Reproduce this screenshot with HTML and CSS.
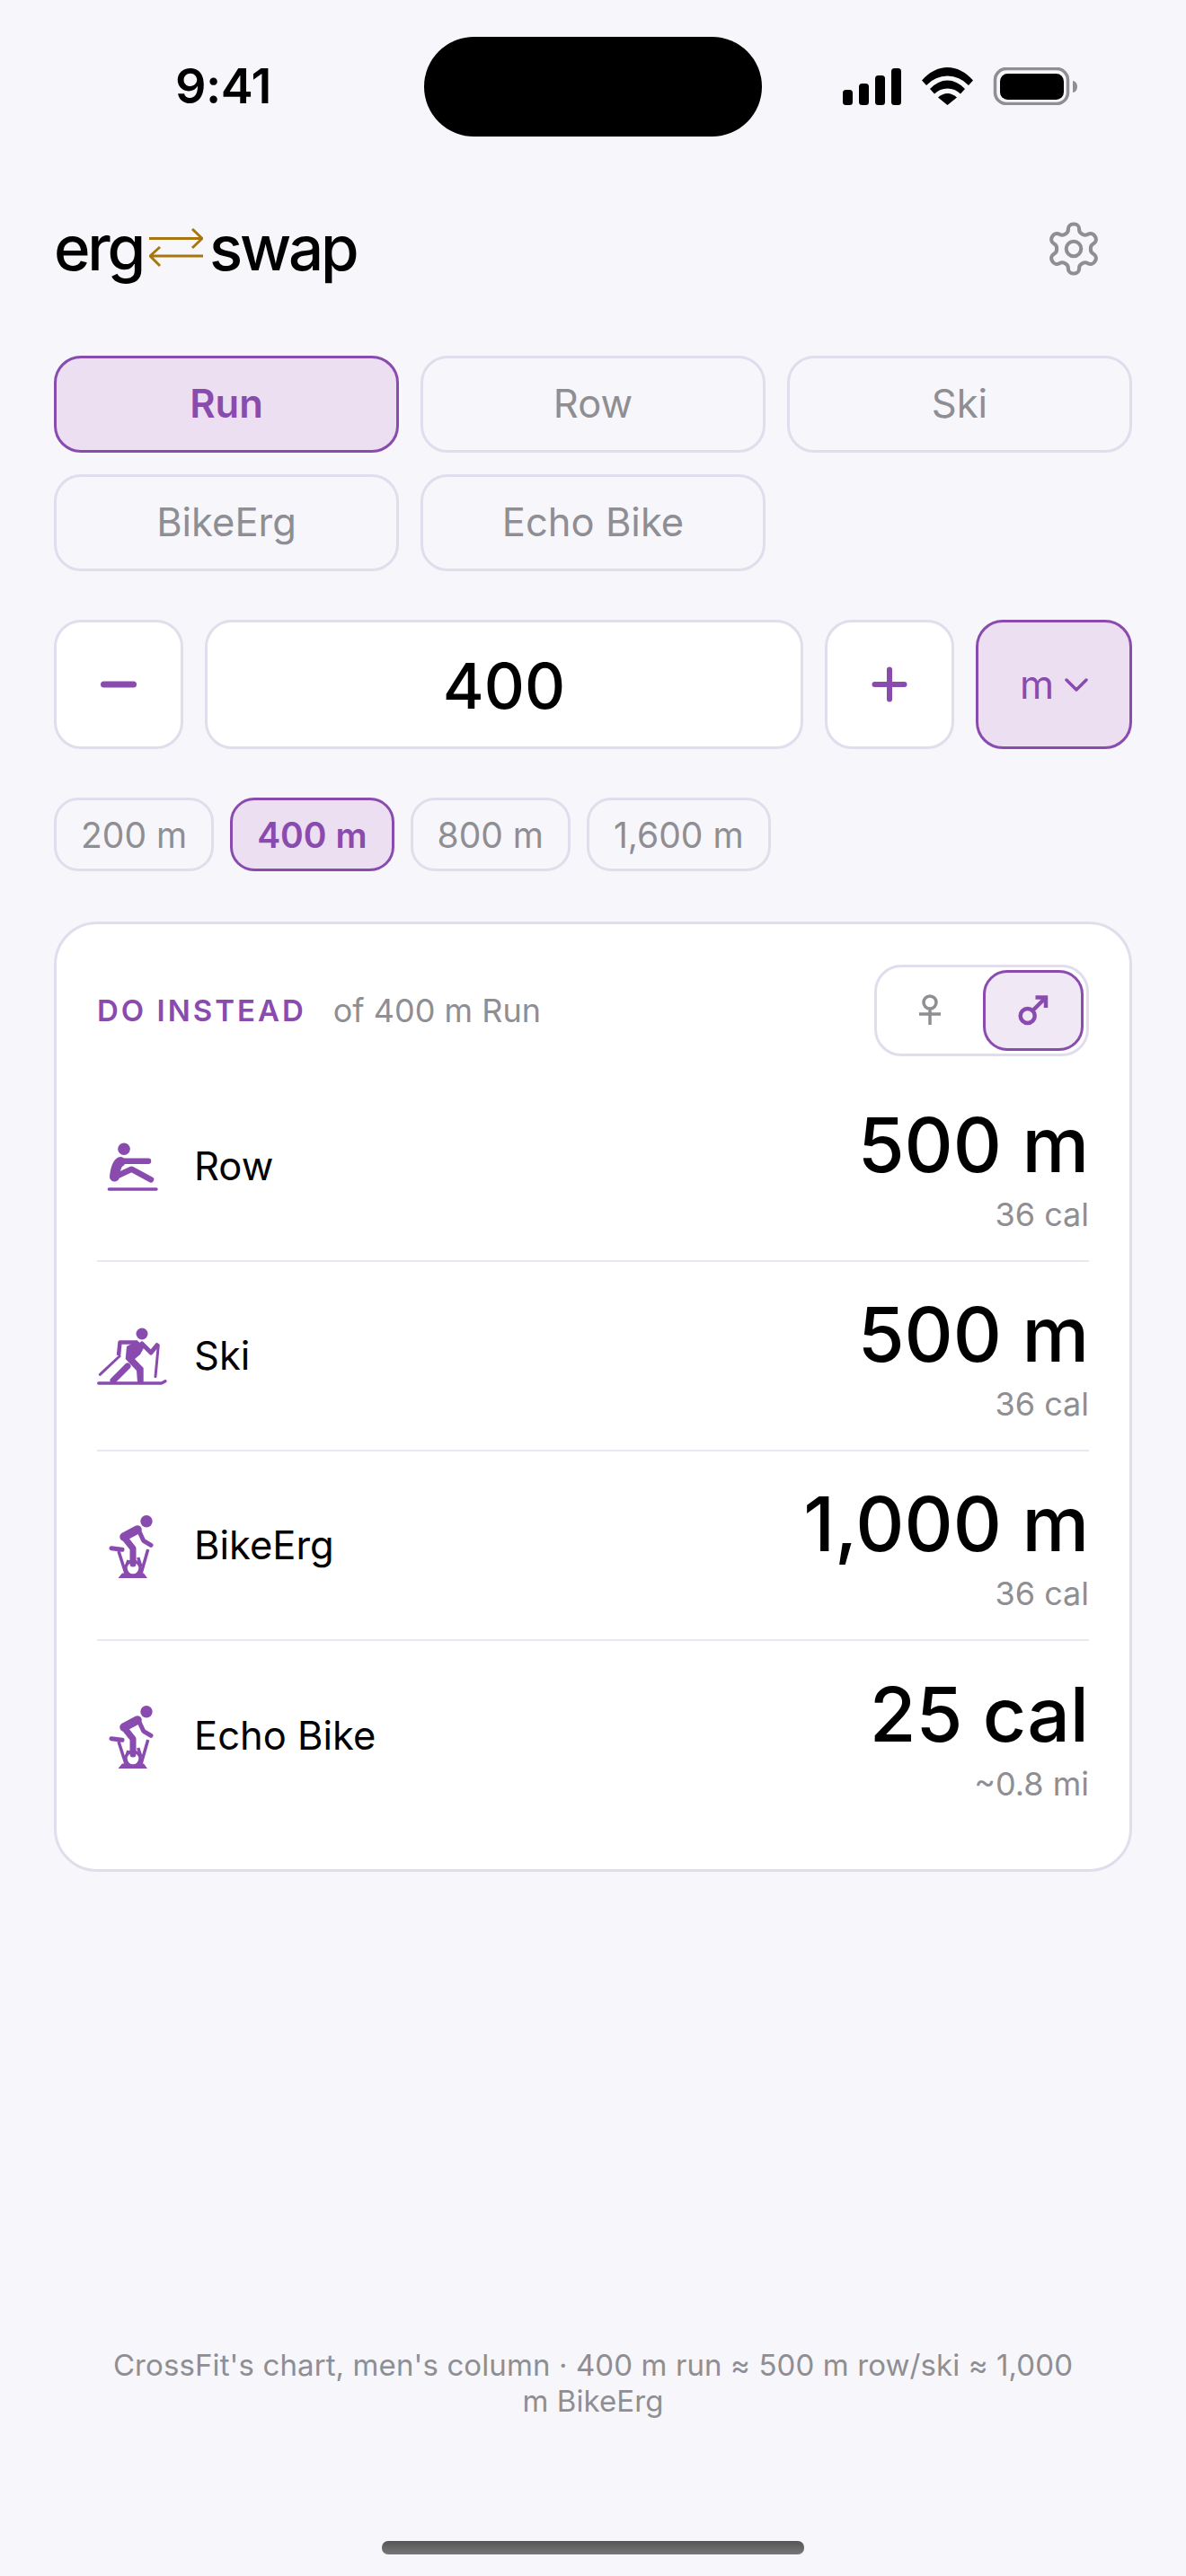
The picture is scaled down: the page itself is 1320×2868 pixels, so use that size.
FILE: index.html
```html
<!DOCTYPE html>
<html lang="en">
  <head>
    <meta charset="UTF-8" />
    <title>ergswap</title>
    <link rel="stylesheet" href="styles.css">
  </head>
  <body>
    <svg class="defs" width="0" height="0">
      <symbol id="ico-row" viewBox="0 0 78 78">
        <circle cx="30" cy="19.200" r="6.800" fill="currentColor" />
        <path d="M25 32.700H57" fill="none" stroke="currentColor" stroke-width="6.500" stroke-linecap="round" />
        <path d="M26 33.500Q21 36 19.500 50" fill="none" stroke="currentColor" stroke-width="11" stroke-linecap="round" />
        <path d="M19.500 50.500L38.300 41.700L60 53.300" fill="none" stroke="currentColor" stroke-width="6.500" stroke-linecap="round" stroke-linejoin="round" />
        <path d="M13.300 64H66" fill="none" stroke="currentColor" stroke-width="3.400" stroke-linecap="round" />
      </symbol>
      <symbol id="ico-ski" viewBox="0 0 78 78">
        <circle cx="50" cy="14" r="6.500" fill="currentColor" />
        <path d="M45 23.500H25.500L24 38" fill="none" stroke="currentColor" stroke-width="4.500" stroke-linejoin="round" />
        <path d="M50 25L60 35L66.700 26.700" fill="none" stroke="currentColor" stroke-width="5" stroke-linecap="round" stroke-linejoin="round" />
        <path d="M25 39L3.300 59.300M68.300 26.700L65 61.700" fill="none" stroke="currentColor" stroke-width="3" stroke-linecap="round" />
        <path d="M33 28L45 21.700L53 28L48 37L42 42L51.700 52V68H45L44 55L31.700 42Z" fill="currentColor" />
        <path d="M34 50L18 66" fill="none" stroke="currentColor" stroke-width="7" stroke-linecap="round" />
        <path d="M1.700 69H71.700L76 66.700" fill="none" stroke="currentColor" stroke-width="3.300" stroke-linecap="round" stroke-linejoin="round" />
      </symbol>
      <symbol id="ico-bike" viewBox="0 0 78 78">
        <circle cx="55" cy="11.700" r="6.700" fill="currentColor" />
        <path d="M30 29L45 21" fill="none" stroke="currentColor" stroke-width="9.500" stroke-linecap="round" />
        <path d="M46 21L51.700 33.300L60 38.300" fill="none" stroke="currentColor" stroke-width="5" stroke-linecap="round" stroke-linejoin="round" />
        <path d="M16 41.700L28 43.300" fill="none" stroke="currentColor" stroke-width="5" stroke-linecap="round" />
        <path d="M24 45L32 70M56.700 43L49 70M35 55L32 63M45.700 52L49 62" fill="none" stroke="currentColor" stroke-width="3.500" />
        <path d="M23.500 75L28 69.500H52L56 75Z" fill="currentColor" />
        <circle cx="40" cy="64" r="8" fill="#fff" stroke="currentColor" stroke-width="3.400" />
        <path d="M30.500 30L40 42V59" fill="none" stroke="currentColor" stroke-width="7" stroke-linecap="round" stroke-linejoin="round" />
      </symbol>
    </svg>

    <div class="status">
      <span class="time">9:41</span>
      <div class="island"></div>
      <svg class="status-icons" width="262" height="42" viewBox="0 0 262 42">
        <rect x="0" y="25" width="11" height="17" rx="3.500" />
        <rect x="18" y="18" width="11" height="24" rx="3.500" />
        <rect x="36" y="9" width="11" height="33" rx="3.500" />
        <rect x="54" y="1" width="11" height="41" rx="3.500" />
        <path d="M88 14.500Q101 0 116.500 0T145 14.500L140 20Q130 9.500 116.500 9.500T93 20Z" />
        <path d="M97 24Q106 14.500 116.500 14.500T136 24L131 29.500Q125 23.500 116.500 23.500T102 29.500Z" />
        <path d="M106 33.500Q111 29 116.500 29T127 33.500L116.500 42Z" />
        <rect x="169.500" y="1.500" width="81" height="39" rx="12.500" fill="none" stroke="#8e8e93" stroke-width="3.500" />
        <rect x="175" y="7" width="71" height="29" rx="8.500" />
        <path d="M256 15C259 15.500 261 18 261 21.500S259 27.500 256 28Z" fill="#8e8e93" />
      </svg>
    </div>

    <main>
      <header class="top">
        <h1 class="logo">
          <span>erg</span>
          <svg width="60" height="44" viewBox="0 0 60 44">
            <path d="M0 11.500H58M48 1L59 11.500L48 22M60 31H2M12 21L1 31L12 42" fill="none" stroke="#a8760f" stroke-width="3" />
          </svg>
          <span>swap</span>
        </h1>
        <svg class="gear" width="66" height="66" viewBox="0 0 24 24" fill="none" stroke="currentColor" stroke-width="1.500" stroke-linecap="round" stroke-linejoin="round">
          <path d="M12.22 2h-.44a2 2 0 0 0-2 2v.18a2 2 0 0 1-1 1.730l-.43.25a2 2 0 0 1-2 0l-.15-.08a2 2 0 0 0-2.730.73l-.22.38a2 2 0 0 0 .73 2.730l.15.1a2 2 0 0 1 1 1.720v.51a2 2 0 0 1-1 1.740l-.15.09a2 2 0 0 0-.73 2.730l.22.38a2 2 0 0 0 2.730.73l.15-.08a2 2 0 0 1 2 0l.43.25a2 2 0 0 1 1 1.730V20a2 2 0 0 0 2 2h.44a2 2 0 0 0 2-2v-.18a2 2 0 0 1 1-1.730l.43-.25a2 2 0 0 1 2 0l.15.08a2 2 0 0 0 2.730-.73l.22-.39a2 2 0 0 0-.73-2.730l-.15-.08a2 2 0 0 1-1-1.740v-.5a2 2 0 0 1 1-1.740l.15-.09a2 2 0 0 0 .73-2.730l-.22-.38a2 2 0 0 0-2.730-.73l-.15.08a2 2 0 0 1-2 0l-.43-.25a2 2 0 0 1-1-1.730V4a2 2 0 0 0-2-2z" />
          <circle cx="12" cy="12" r="3" />
        </svg>
      </header>

      <div class="sports">
        <button class="sport active">Run</button>
        <button class="sport">Row</button>
        <button class="sport">Ski</button>
        <button class="sport">BikeErg</button>
        <button class="sport">Echo Bike</button>
      </div>

      <div class="stepper">
        <button class="step">
          <svg width="40" height="8" viewBox="0 0 40 8"><path d="M3.500 4H36.500" stroke="currentColor" stroke-width="7" stroke-linecap="round" /></svg>
        </button>
        <div class="amount">400</div>
        <button class="step">
          <svg width="40" height="40" viewBox="0 0 40 40"><path d="M3.500 20H36.500M20 3.500V36.500" stroke="currentColor" stroke-width="6" stroke-linecap="round" /></svg>
        </button>
        <button class="unit">m
          <svg width="26" height="15" viewBox="0 0 26 15"><path d="M2 2L13 13L24 2" fill="none" stroke="currentColor" stroke-width="3.500" stroke-linecap="round" stroke-linejoin="round" /></svg>
        </button>
      </div>

      <div class="presets">
        <button class="preset">200 m</button>
        <button class="preset active">400 m</button>
        <button class="preset">800 m</button>
        <button class="preset">1,600 m</button>
      </div>

      <section class="card">
        <div class="card-head">
          <div class="card-title">
            <span class="label">DO INSTEAD</span>
            <span class="of">of 400 m Run</span>
          </div>
          <div class="toggle">
            <button class="sex">
              <svg width="40" height="52" viewBox="0 0 40 52"><path d="M20 24V42M8 30H32" fill="none" stroke="currentColor" stroke-width="3.500" /><circle cx="20" cy="17" r="7" fill="none" stroke="currentColor" stroke-width="3.500" /></svg>
            </button>
            <button class="sex active">
              <svg width="44" height="44" viewBox="0 0 44 44"><circle cx="15.700" cy="28" r="8" fill="none" stroke="currentColor" stroke-width="4.500" /><path d="M21.500 22L36 7.500M24.500 7.500H36V19" fill="none" stroke="currentColor" stroke-width="4.500" /></svg>
            </button>
          </div>
        </div>

        <div class="row">
          <svg class="row-icon"><use href="#ico-row" /></svg>
          <span class="name">Row</span>
          <div class="result"><span class="big">500 m</span><span class="sub">36 cal</span></div>
        </div>
        <div class="row">
          <svg class="row-icon"><use href="#ico-ski" /></svg>
          <span class="name">Ski</span>
          <div class="result"><span class="big">500 m</span><span class="sub">36 cal</span></div>
        </div>
        <div class="row">
          <svg class="row-icon"><use href="#ico-bike" /></svg>
          <span class="name">BikeErg</span>
          <div class="result"><span class="big">1,000 m</span><span class="sub">36 cal</span></div>
        </div>
        <div class="row">
          <svg class="row-icon"><use href="#ico-bike" /></svg>
          <span class="name">Echo Bike</span>
          <div class="result"><span class="big">25 cal</span><span class="sub">~0.8 mi</span></div>
        </div>
      </section>
    </main>

    <footer>
      <p>CrossFit's chart, men's column · 400 m run ≈ 500 m row/ski ≈ 1,000 m BikeErg</p>
      <div class="home-bar"></div>
    </footer>
  </body>
</html>
```

FILE: styles.css
```css
* {
  box-sizing: border-box;
}

body {
  margin: 0;
  width: 1320px;
  height: 2868px;
  display: flex;
  flex-direction: column;
  background: #f7f6fb;
  color: #000;
  font-family: Inter, "Noto Sans", sans-serif;
  overflow: hidden;
}

button {
  font: inherit;
  padding: 0;
  cursor: pointer;
}

.defs {
  position: absolute;
}

.status {
  height: 218px;
  padding: 75px 120px 0 195px;
  display: flex;
  justify-content: space-between;
  align-items: flex-start;
  position: relative;
}

.time {
  font-size: 54px;
  font-weight: 600;
  line-height: 42px;
  letter-spacing: -0.5px;
}

.island {
  position: absolute;
  left: 472px;
  top: 41px;
  width: 376px;
  height: 111px;
  border-radius: 56px;
  background: #000;
}

.status-icons {
  margin-left: auto;
  fill: #000;
}

main {
  padding: 0 60px;
}

.top {
  height: 116px;
  margin-bottom: 62px;
  display: flex;
  justify-content: space-between;
  align-items: center;
}

.logo {
  margin: 0;
  display: flex;
  align-items: center;
  gap: 7px;
  font-size: 69px;
  font-weight: 500;
  letter-spacing: -3.200px;
  line-height: 1;
}

.gear {
  color: #8e8e93;
  margin-right: 32px;
  margin-top: 2px;
}

.sports {
  display: grid;
  grid-template-columns: repeat(3, 1fr);
  gap: 24px;
  margin-bottom: 54px;
}

.sport {
  height: 108px;
  padding-bottom: 2px;
  border: 3px solid #e2ddec;
  border-radius: 30px;
  background: transparent;
  color: #8e8e93;
  font-size: 43.500px;
}

.step,
.amount,
.unit {
  border: 3px solid #e2ddec;
  border-radius: 30px;
}

.sport.active,
.unit,
.preset.active {
  background: #ebdff1;
  border-color: #8a4baf;
  color: #8a4baf;
}

.sport.active,
.preset.active {
  font-weight: 600;
}

.stepper {
  display: flex;
  gap: 24px;
  height: 144px;
  margin-bottom: 54px;
}

.step {
  width: 144px;
  background: #fff;
  color: #8a4baf;
  display: flex;
  align-items: center;
  justify-content: center;
}

.amount {
  flex: 1;
  padding-top: 2px;
  background: #fff;
  display: flex;
  align-items: center;
  justify-content: center;
  font-size: 70px;
  font-weight: 500;
}

.unit {
  width: 174px;
  display: flex;
  align-items: center;
  justify-content: center;
  gap: 12px;
  font-size: 43.500px;
}

.presets {
  display: flex;
  gap: 18px;
  margin-bottom: 56px;
}

.preset {
  height: 82px;
  padding: 0 27px;
  border: 3px solid #e2ddec;
  border-radius: 27px;
  background: transparent;
  color: #8e8e93;
  font-size: 39px;
}

.card {
  background: #fff;
  border: 3px solid #e2ddec;
  border-radius: 48px;
  padding: 45px 45px 43px;
}

.card-head {
  display: flex;
  justify-content: space-between;
  align-items: center;
  margin-bottom: 18px;
}

.card-title {
  display: flex;
  align-items: center;
  gap: 30px;
}

.label {
  color: #8a4baf;
  font-size: 33px;
  font-weight: 600;
  letter-spacing: 3px;
}

.of {
  color: #8e8e93;
  font-size: 36px;
}

.toggle {
  display: flex;
  gap: 2px;
  width: 239px;
  height: 102px;
  padding: 3px;
  border: 3px solid #e2ddec;
  border-radius: 30px;
}

.sex {
  flex: 1;
  border: 3px solid transparent;
  border-radius: 27px;
  background: transparent;
  color: #8e8e93;
  display: flex;
  align-items: center;
  justify-content: center;
}

.sex.active {
  background: #f0e8f5;
  border-color: #8a4baf;
  color: #8a4baf;
}

.row {
  height: 211px;
  display: flex;
  align-items: center;
  border-bottom: 2px solid #e9e7f0;
}

.row:last-child {
  border-bottom: 0;
}

.row-icon {
  width: 78px;
  height: 78px;
  color: #8a4baf;
  margin-right: 30px;
}

.name {
  flex: 1;
  font-size: 43.500px;
  padding-bottom: 2px;
}

.result {
  padding-top: 8px;
  display: flex;
  flex-direction: column;
  align-items: flex-end;
}

.big {
  font-size: 84px;
  font-weight: 500;
  line-height: 90px;
}

.sub {
  margin-top: 8px;
  color: #8e8e93;
  font-size: 36px;
  line-height: 48px;
}

footer {
  margin-top: auto;
  padding: 0 120px 24px;
  text-align: center;
  color: #8e8e93;
  font-size: 33px;
  line-height: 40px;
  letter-spacing: 0.1px;
}

footer p {
  margin: 0 0 136px;
}

.home-bar {
  width: 470px;
  height: 15px;
  margin: 0 auto;
  border-radius: 7px;
  background: linear-gradient(#555, #777);
}
```
